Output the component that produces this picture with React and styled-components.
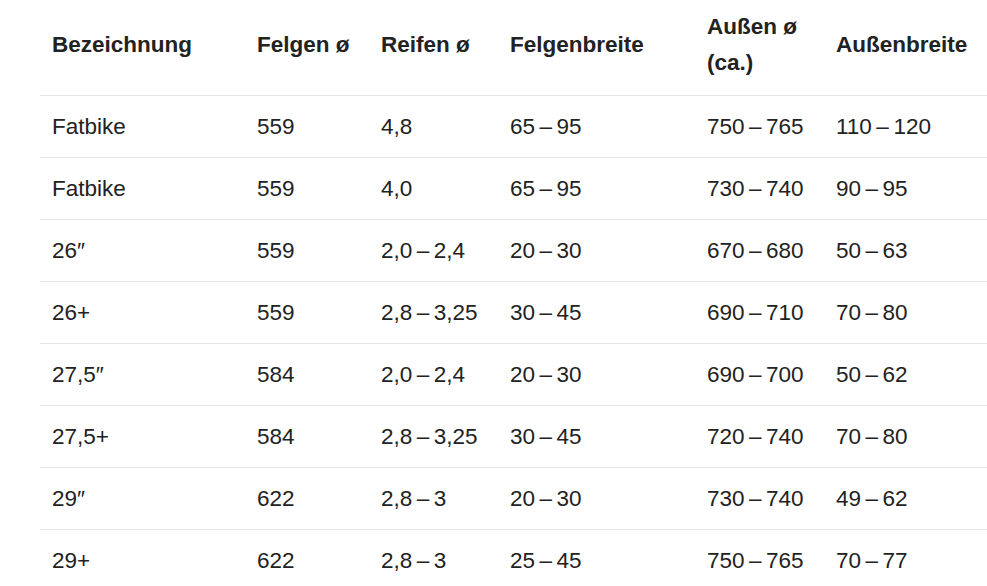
import React from "react";
import styled, { createGlobalStyle } from "styled-components";

const GlobalStyle = createGlobalStyle`
  html, body {
    margin: 0;
    padding: 0;
    background: #fff;
    overflow: hidden;
  }
`;

const Page = styled.div`
  padding-left: 40px;
  width: 987px;
  box-sizing: border-box;
  font-family: "Liberation Sans", Arial, sans-serif;
  color: #222;
`;

const Table = styled.table`
  border-collapse: collapse;
  table-layout: fixed;
  width: 947px;
  font-size: 22.5px;
  line-height: 36px;
`;

const HeadCell = styled.th`
  text-align: left;
  font-weight: bold;
  vertical-align: middle;
  padding: 9px 12px 14px;
  border-bottom: 1px solid #e6e6e6;
`;

const Cell = styled.td`
  text-align: left;
  vertical-align: middle;
  padding: 13px 12px 12px;
  border-bottom: 1px solid #e6e6e6;
  white-space: nowrap;
`;

const columns = [
  { label: "Bezeichnung", width: 205 },
  { label: "Felgen ø", width: 124 },
  { label: "Reifen ø", width: 129 },
  { label: "Felgenbreite", width: 197 },
  { label: "Außen ø (ca.)", width: 129 },
  { label: "Außenbreite", width: 163 },
];

const d = "\u2009\u2013\u2009";

const rows = [
  ["Fatbike", "559", "4,8", `65${d}95`, `750${d}765`, `110${d}120`],
  ["Fatbike", "559", "4,0", `65${d}95`, `730${d}740`, `90${d}95`],
  ["26\u2033", "559", `2,0${d}2,4`, `20${d}30`, `670${d}680`, `50${d}63`],
  ["26+", "559", `2,8${d}3,25`, `30${d}45`, `690${d}710`, `70${d}80`],
  ["27,5\u2033", "584", `2,0${d}2,4`, `20${d}30`, `690${d}700`, `50${d}62`],
  ["27,5+", "584", `2,8${d}3,25`, `30${d}45`, `720${d}740`, `70${d}80`],
  ["29\u2033", "622", `2,8${d}3`, `20${d}30`, `730${d}740`, `49${d}62`],
  ["29+", "622", `2,8${d}3`, `25${d}45`, `750${d}765`, `70${d}77`],
];

export default function App() {
  return (
    <>
      <GlobalStyle />
      <Page>
        <Table>
          <colgroup>
            {columns.map((c) => (
              <col key={c.label} style={{ width: c.width }} />
            ))}
          </colgroup>
          <thead>
            <tr>
              {columns.map((c) => (
                <HeadCell key={c.label}>{c.label}</HeadCell>
              ))}
            </tr>
          </thead>
          <tbody>
            {rows.map((r, i) => (
              <tr key={i}>
                {r.map((v, j) => (
                  <Cell key={j}>{v}</Cell>
                ))}
              </tr>
            ))}
          </tbody>
        </Table>
      </Page>
    </>
  );
}
